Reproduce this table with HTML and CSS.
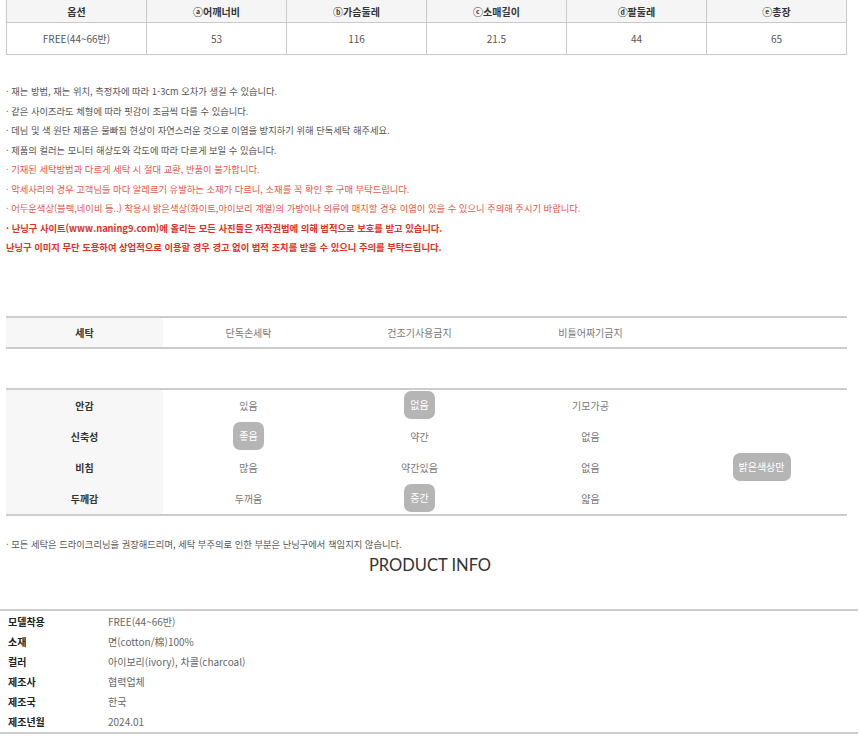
FILE: index.html
```html
<!DOCTYPE html>
<html lang="ko">
<head>
    <meta charset="UTF-8">
    <meta name="viewport" content="width=device-width, initial-scale=1.0">
    <title>상품 상세 정보</title>
    <link rel="stylesheet" href="styles.css">
</head>
<body>
    <div class="container">
        <!-- 사이즈 표 -->
        <table class="size-table">
            <tr>
                <th>옵션</th>
                <th>ⓐ어깨너비</th>
                <th>ⓑ가슴둘레</th>
                <th>ⓒ소매길이</th>
                <th>ⓓ팔둘레</th>
                <th>ⓔ총장</th>
            </tr>
            <tr>
                <td>FREE(44~66반)</td>
                <td>53</td>
                <td>116</td>
                <td>21.5</td>
                <td>44</td>
                <td>65</td>
            </tr>
        </table>

        <ul class="notes">
            <li>· 재는 방법, 재는 위치, 측정자에 따라 1-3cm 오차가 생길 수 있습니다.</li>
            <li>· 같은 사이즈라도 체형에 따라 핏감이 조금씩 다를 수 있습니다.</li>
            <li>· 데님 및 색 원단 제품은 물빠짐 현상이 자연스러운 것으로 이염을 방지하기 위해 단독세탁 해주세요.</li>
            <li>· 제품의 컬러는 모니터 해상도와 각도에 따라 다르게 보일 수 있습니다.</li>
            <li class="warn">· 기재된 세탁방법과 다르게 세탁 시 절대 교환, 반품이 불가합니다.</li>
            <li class="warn">· 악세사리의 경우 고객님들 마다 알레르기 유발하는 소재가 다르니, 소재를 꼭 확인 후 구매 부탁드립니다.</li>
            <li class="warn">· 어두운색상(블랙,네이비 등..) 착용시 밝은색상(화이트,아이보리 계열)의 가방이나 의류에 매치할 경우 이염이 있을 수 있으니 주의해 주시기 바랍니다.</li>
            <li class="strong">· 난닝구 사이트(www.naning9.com)에 올리는 모든 사진들은 저작권법에 의해 법적으로 보호를 받고 있습니다.</li>
            <li class="strong">난닝구 이미지 무단 도용하여 상업적으로 이용할 경우 경고 없이 법적 조치를 받을 수 있으니 주의를 부탁드립니다.</li>
        </ul>

        <!-- 세탁 -->
        <table class="info-table wash-table">
            <tr>
                <th>세탁</th>
                <td>단독손세탁</td>
                <td>건조기사용금지</td>
                <td>비틀어짜기금지</td>
                <td></td>
            </tr>
        </table>

        <!-- 소재 특성 -->
        <table class="info-table attr-table">
            <tr>
                <th>안감</th>
                <td>있음</td>
                <td><span class="pill">없음</span></td>
                <td>기모가공</td>
                <td></td>
            </tr>
            <tr>
                <th>신축성</th>
                <td><span class="pill">좋음</span></td>
                <td>약간</td>
                <td>없음</td>
                <td></td>
            </tr>
            <tr>
                <th>비침</th>
                <td>많음</td>
                <td>약간있음</td>
                <td>없음</td>
                <td><span class="pill">밝은색상만</span></td>
            </tr>
            <tr>
                <th>두께감</th>
                <td>두꺼움</td>
                <td><span class="pill">중간</span></td>
                <td>얇음</td>
                <td></td>
            </tr>
        </table>

        <p class="wash-note">· 모든 세탁은 드라이크리닝을 권장해드리며, 세탁 부주의로 인한 부분은 난닝구에서 책임지지 않습니다.</p>
    </div>

    <h2 class="section-title">PRODUCT INFO</h2>

    <table class="product-table">
        <tr><th>모델착용</th><td>FREE(44~66반)</td></tr>
        <tr><th>소재</th><td>면(cotton/棉)100%</td></tr>
        <tr><th>컬러</th><td>아이보리(ivory), 차콜(charcoal)</td></tr>
        <tr><th>제조사</th><td>협력업체</td></tr>
        <tr><th>제조국</th><td>한국</td></tr>
        <tr><th>제조년월</th><td>2024.01</td></tr>
    </table>
</body>
</html>
```

FILE: styles.css
```css
body {
    font-family: "Noto Sans CJK KR", "Liberation Sans", sans-serif;
    font-size: 10px;
    color: #555;
    margin: 0;
    padding: 0;
    background-color: #ffffff;
}

.container {
    width: 841px;
    padding-left: 6px;
}

table {
    border-collapse: collapse;
    width: 100%;
}

/* size table */
.size-table th,
.size-table td {
    border: 1px solid #c9c9c9;
    text-align: center;
    width: 16.66%;
    padding: 0;
}

.size-table tr:first-child th {
    border-top: none;
}

.size-table th {
    height: 22px;
    background: #f5f5f5;
    color: #333;
    font-weight: bold;
}

.size-table td {
    height: 31px;
}

/* notes */
.notes {
    list-style: none;
    margin: 27px 0 0;
    padding: 0;
    font-size: 9.3px;
}

.notes li {
    height: 19.5px;
    line-height: 19.5px;
    white-space: nowrap;
}

.notes .warn {
    color: #e5584a;
}

.notes .strong {
    color: #dd3322;
    font-weight: bold;
}

/* wash / attribute tables */
.info-table {
    border-top: 2px solid #ccc;
    border-bottom: 2px solid #ccc;
    table-layout: fixed;
}

.info-table th {
    width: 157px;
    background: #f7f7f7;
    color: #333;
    font-weight: bold;
}

.info-table td {
    text-align: center;
    color: #777;
}

.wash-table {
    margin-top: 58px;
}

.wash-table th,
.wash-table td {
    height: 29px;
    padding: 0;
}

.attr-table {
    margin-top: 39px;
}

.attr-table th,
.attr-table td {
    height: 31px;
    padding: 0;
}

.pill {
    display: inline-block;
    padding: 0 6px;
    height: 28px;
    line-height: 28px;
    border-radius: 7px;
    background: #b5b5b5;
    color: #ffffff;
}

.wash-note {
    margin: 19px 0 0;
    line-height: 18px;
    font-size: 9.3px;
}

/* product info */
.section-title {
    margin: 2px 0 0;
    text-align: center;
    font-family: Lato, "Liberation Sans", sans-serif;
    font-size: 16.5px;
    font-weight: normal;
    color: #333;
}

.product-table {
    width: 858px;
    margin-top: 34px;
    border-top: 2px solid #ccc;
    border-bottom: 2px solid #ccc;
}

.product-table th,
.product-table td {
    height: 20px;
    padding: 0;
    text-align: left;
}

.product-table th {
    width: 100px;
    padding-left: 8px;
    color: #222;
    font-weight: bold;
}

.product-table td {
    color: #666;
}

.product-table tr:first-child th,
.product-table tr:first-child td {
    padding-top: 1px;
}
```
